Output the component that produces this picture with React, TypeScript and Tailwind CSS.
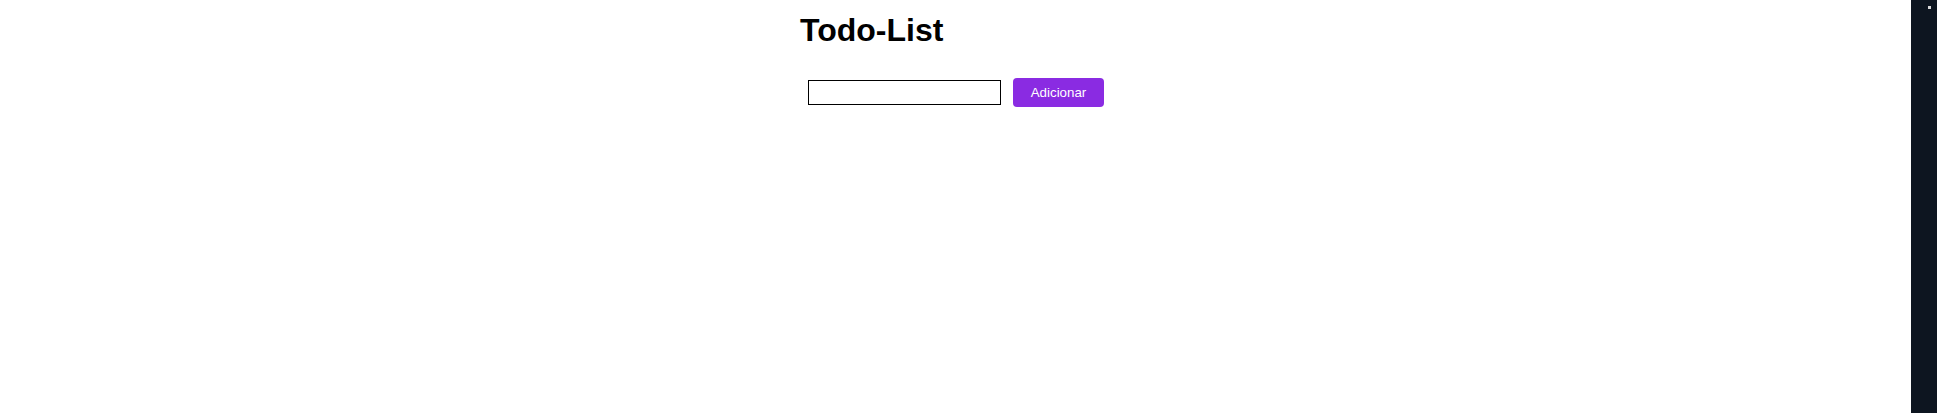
import { useState } from "react"

export default function App() {
  const [task, setTask] = useState("")

  return (
    <div className="flex h-[413px] w-full bg-white font-['Liberation_Sans',Arial,sans-serif] text-black">
      <div className="flex-1">
        <div className="mx-auto w-[311px] pt-[12px]">
          <h1 className="text-[32px] leading-[37px] font-bold">Todo-List</h1>
          <div className="mt-[29px] flex items-center gap-[12px] pl-[8px]">
            <input
              value={task}
              onChange={(e) => setTask(e.target.value)}
              className="h-[25px] w-[193px] border border-black px-1 text-[13px] outline-none"
            />
            <button className="h-[29px] w-[91px] rounded-[4px] bg-[#8a2be2] text-[13.33px] text-white">
              Adicionar
            </button>
          </div>
        </div>
      </div>
      {/* dark side strip */}
      <div className="relative w-[26px] bg-[#0d1520]">
        <span className="absolute top-[6px] left-[17px] h-[3px] w-[3px] bg-[#d8d8d8]" />
      </div>
    </div>
  )
}
